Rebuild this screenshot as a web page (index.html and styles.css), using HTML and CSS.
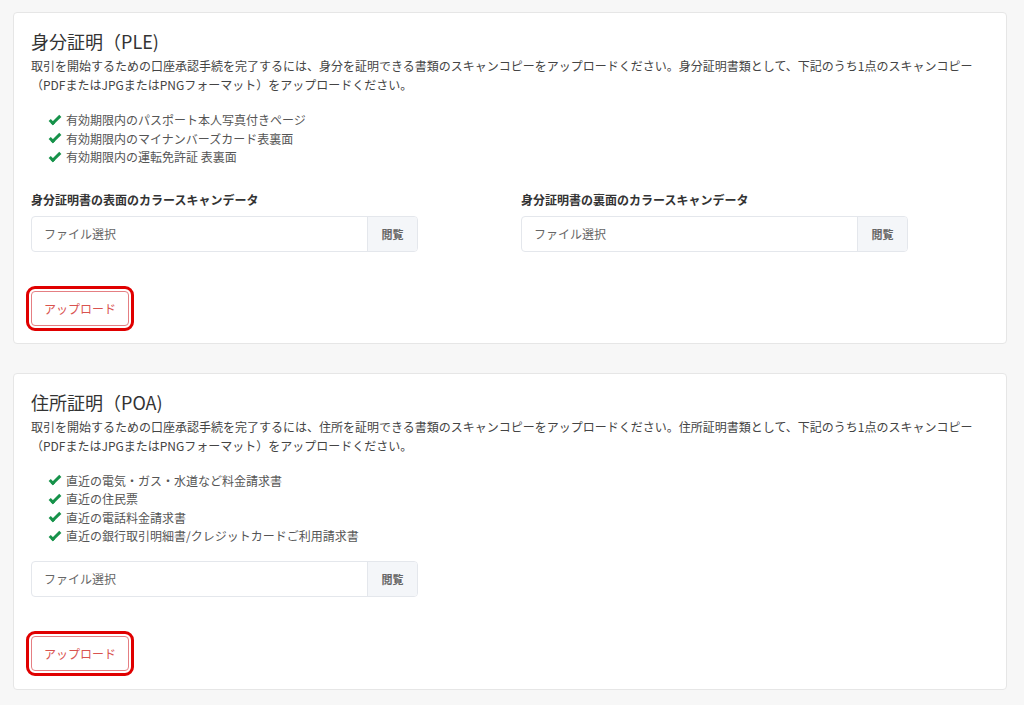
FILE: index.html
```
<!DOCTYPE html>
<html lang="ja">
<head>
	<meta charset="UTF-8">
	<title>本人確認書類のアップロード</title>
	<link rel="stylesheet" href="styles.css">
</head>
<body>
	<div class="page">
		<div class="card">
			<h2 class="card-title">身分証明（PLE)</h2>
			<p class="desc">取引を開始するための口座承認手続を完了するには、身分を証明できる書類のスキャンコピーをアップロードください。身分証明書類として、下記のうち1点のスキャンコピー<br>（PDFまたはJPGまたはPNGフォーマット）をアップロードください。</p>
			<ul class="doc-list">
				<li><span class="check"></span>有効期限内のパスポート本人写真付きページ</li>
				<li><span class="check"></span>有効期限内のマイナンバーズカード表裏面</li>
				<li><span class="check"></span>有効期限内の運転免許証 表裏面</li>
			</ul>
			<div class="file-row">
				<div class="file-col">
					<label class="file-label">身分証明書の表面のカラースキャンデータ</label>
					<div class="file-input">
						<span class="file-name">ファイル選択</span>
						<span class="file-btn">閲覧</span>
					</div>
				</div>
				<div class="file-col">
					<label class="file-label">身分証明書の裏面のカラースキャンデータ</label>
					<div class="file-input">
						<span class="file-name">ファイル選択</span>
						<span class="file-btn">閲覧</span>
					</div>
				</div>
			</div>
			<button class="upload">アップロード</button>
		</div>

		<div class="card">
			<h2 class="card-title">住所証明（POA)</h2>
			<p class="desc">取引を開始するための口座承認手続を完了するには、住所を証明できる書類のスキャンコピーをアップロードください。住所証明書類として、下記のうち1点のスキャンコピー<br>（PDFまたはJPGまたはPNGフォーマット）をアップロードください。</p>
			<ul class="doc-list">
				<li><span class="check"></span>直近の電気・ガス・水道など料金請求書</li>
				<li><span class="check"></span>直近の住民票</li>
				<li><span class="check"></span>直近の電話料金請求書</li>
				<li><span class="check"></span>直近の銀行取引明細書/クレジットカードご利用請求書</li>
			</ul>
			<div class="file-row single">
				<div class="file-col">
					<div class="file-input">
						<span class="file-name">ファイル選択</span>
						<span class="file-btn">閲覧</span>
					</div>
				</div>
			</div>
			<button class="upload">アップロード</button>
		</div>
	</div>
</body>
</html>
```

FILE: styles.css
```
*{
	margin: 0;
	padding: 0;
	box-sizing: border-box;
}
body{
	background: #f7f7f7;
	font-family: "Noto Sans CJK JP", "Noto Sans", sans-serif;
	color: #333;
}
.page{
	display: flex;
	flex-direction: column;
	gap: 29px;
	padding: 12px 17px 0 13px;
}
.card{
	background: #fff;
	border: 1px solid #e6e6e6;
	border-radius: 4px;
	padding: 16px 17px 17px 17px;
}
.card + .card{
	padding-bottom: 18px;
}
.card-title{
	font-size: 18px;
	font-weight: 400;
	line-height: 24px;
	color: #333;
}
.desc{
	margin-top: 3px;
	font-size: 12px;
	line-height: 19px;
	color: #444;
}
.doc-list{
	list-style: none;
	margin: 17px 0 0 17px;
}
.doc-list li{
	display: flex;
	align-items: center;
	font-size: 12px;
	line-height: 18.5px;
	color: #555;
}
/* チェックマーク */
.check{
	width: 12px;
	height: 6px;
	margin: 0 5px 3px 1px;
	border-left: 3px solid #16924a;
	border-bottom: 3px solid #16924a;
	transform: rotate(-45deg);
}
.file-row{
	display: flex;
	gap: 103px;
	margin-top: 24px;
}
.file-row.single{
	margin-top: 15px;
}
.file-col{
	width: 387px;
}
.file-label{
	display: block;
	font-size: 12px;
	font-weight: 700;
	line-height: 18px;
	color: #333;
	margin-bottom: 7px;
}
.file-input{
	display: flex;
	height: 36px;
	border: 1px solid #e4e7ec;
	border-radius: 4px;
	overflow: hidden;
}
.file-name{
	flex: 1;
	display: flex;
	align-items: center;
	padding-left: 12px;
	font-size: 12px;
	color: #666;
}
.file-btn{
	width: 50px;
	display: flex;
	align-items: center;
	justify-content: center;
	background: #f4f6f9;
	border-left: 1px solid #e4e7ec;
	font-size: 11px;
	font-weight: 700;
	color: #666;
}
.upload{
	display: block;
	margin: 39px 0 0 0;
	width: 98px;
	height: 35px;
	background: #fff;
	border: 1px solid #e57f83;
	border-radius: 4px;
	font-family: inherit;
	font-size: 12px;
	color: #d9534f;
	outline: 3px solid #e00000;
	outline-offset: 2px;
}
```
